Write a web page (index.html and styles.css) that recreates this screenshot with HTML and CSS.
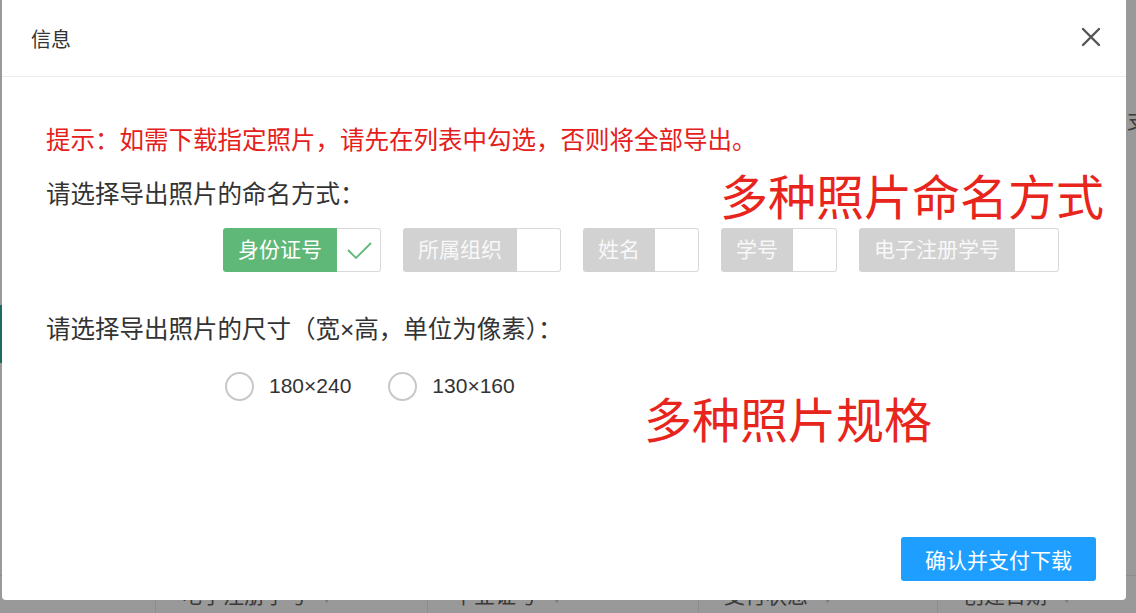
FILE: index.html
```html
<!DOCTYPE html>
<html lang="zh-CN">

<head>
    <meta charset="UTF-8">
    <meta name="viewport" content="width=device-width, initial-scale=1.0">
    <title>导出照片</title>
    <link rel="stylesheet" href="styles.css">
</head>

<body>
    <!-- page under the mask -->
    <div class="page">
        <div class="page__side"></div>
        <div class="page__edge">支</div>
        <div class="table-head">
            <div class="table-head__cell table-head__cell--first"></div>
            <div class="table-head__cell">电子注册学号 <span class="table-head__arrow">▼</span></div>
            <div class="table-head__cell">毕业证号 <span class="table-head__arrow">▼</span></div>
            <div class="table-head__cell">支付状态 <span class="table-head__arrow">▼</span></div>
            <div class="table-head__cell">创建日期 <span class="table-head__arrow">▼</span></div>
        </div>
    </div>

    <!-- dialog -->
    <div class="dialog">
        <div class="dialog__head">
            <span class="dialog__title">信息</span>
            <button class="dialog__close" type="button">
                <svg width="20" height="20" viewBox="0 0 20 20">
                    <path d="M2 2 L18 18 M18 2 L2 18" stroke="#555" stroke-width="2.4" fill="none" stroke-linecap="round" />
                </svg>
            </button>
        </div>

        <div class="dialog__body">
            <p class="dialog__tip">提示：如需下载指定照片，请先在列表中勾选，否则将全部导出。</p>

            <p class="dialog__label">请选择导出照片的命名方式：</p>
            <div class="switches">
                <div class="switch switch--on">
                    <span class="switch__text">身份证号</span>
                    <span class="switch__box">
                        <svg width="28" height="22" viewBox="0 0 28 22">
                            <path d="M3 11 L11 19 L26 4" stroke="#5fb878" stroke-width="1.8" fill="none" />
                        </svg>
                    </span>
                </div>
                <div class="switch">
                    <span class="switch__text">所属组织</span>
                    <span class="switch__box"></span>
                </div>
                <div class="switch">
                    <span class="switch__text">姓名</span>
                    <span class="switch__box"></span>
                </div>
                <div class="switch">
                    <span class="switch__text">学号</span>
                    <span class="switch__box"></span>
                </div>
                <div class="switch">
                    <span class="switch__text">电子注册学号</span>
                    <span class="switch__box"></span>
                </div>
            </div>

            <p class="dialog__label dialog__label--size">请选择导出照片的尺寸（宽×高，单位为像素）：</p>
            <div class="radios">
                <label class="radio">
                    <span class="radio__icon"></span>
                    <span class="radio__text">180×240</span>
                </label>
                <label class="radio">
                    <span class="radio__icon"></span>
                    <span class="radio__text">130×160</span>
                </label>
            </div>
        </div>

        <div class="dialog__foot">
            <button class="dialog__btn" type="button">确认并支付下载</button>
        </div>

        <!-- annotations -->
        <div class="note note--naming">多种照片命名方式</div>
        <div class="note note--size">多种照片规格</div>
    </div>
</body>

</html>
```

FILE: styles.css
```css
* {
    box-sizing: border-box;
}

body {
    margin: 0;
    width: 1136px;
    height: 613px;
    overflow: hidden;
    position: relative;
    background: #999999;
    font-family: "Liberation Sans", "Noto Sans CJK SC", sans-serif;
    color: #333333;
}

p {
    margin: 0;
}

/* page behind mask */
.page {
    height: 100%;
    position: relative;
}

.page__side {
    position: absolute;
    left: 0;
    top: 305px;
    width: 2px;
    height: 58px;
    background: #1f6a5c;
}

.page__edge {
    position: absolute;
    left: 1127px;
    top: 106px;
    font-size: 21px;
    line-height: 30px;
    color: #3c3c3c;
}

.table-head {
    position: absolute;
    left: 0;
    top: 575px;
    height: 44px;
    display: flex;
    border-top: 1px solid #8c8c8c;
}

.table-head__cell {
    flex-shrink: 0;
    width: 200px;
    padding-left: 25px;
    font-size: 21px;
    line-height: 40px;
    color: #3a3a3a;
    border-left: 1px solid #8c8c8c;
    white-space: nowrap;
}

.table-head__cell:nth-child(2) {
    width: 272px;
}

.table-head__cell:nth-child(3) {
    width: 271px;
}

.table-head__cell:nth-child(4) {
    width: 239px;
}

.table-head__cell--first {
    width: 155px;
    border-left: 0;
}

.table-head__arrow {
    font-size: 12px;
    color: #7a7a7a;
    margin-left: 8px;
}

/* dialog */
.dialog {
    position: absolute;
    left: 2px;
    top: 0;
    width: 1124px;
    height: 600px;
    background: #ffffff;
    border-radius: 0 0 4px 4px;
    display: flex;
    flex-direction: column;
}

.dialog__head {
    height: 77px;
    display: flex;
    align-items: center;
    justify-content: space-between;
    padding: 0 24px 0 29px;
    border-bottom: 1px solid #ececec;
}

.dialog__title {
    font-size: 20px;
    color: #333333;
}

.dialog__close {
    border: 0;
    background: none;
    padding: 0;
    width: 22px;
    height: 22px;
    display: flex;
    align-items: center;
    justify-content: center;
    margin-top: -2px;
}

.dialog__body {
    padding: 46px 30px 0 44px;
}

.dialog__tip {
    font-size: 24.5px;
    line-height: 36px;
    color: #e5201b;
}

.dialog__label {
    margin-top: 18px;
    font-size: 24.5px;
    line-height: 36px;
    color: #333333;
}

.dialog__label--size {
    margin-top: 40px;
}

/* switches */
.switches {
    margin-top: 15px;
    margin-left: 177px;
    display: flex;
    gap: 22px;
}

.switch {
    display: flex;
    height: 44px;
}

.switch__text {
    padding: 0 15px;
    line-height: 44px;
    font-size: 21px;
    color: #f8f8f8;
    background: #d2d2d2;
    border-radius: 3px 0 0 3px;
}

.switch--on .switch__text {
    background: #5fb878;
    color: #ffffff;
}

.switch__box {
    width: 44px;
    border: 1px solid #d9d9d9;
    border-left: 0;
    border-radius: 0 3px 3px 0;
    display: flex;
    align-items: center;
    justify-content: center;
}

/* radios */
.radios {
    margin-top: 20px;
    margin-left: 179px;
    display: flex;
    gap: 37px;
    height: 36px;
    align-items: center;
}

.radio {
    display: flex;
    align-items: center;
    gap: 15px;
}

.radio__icon {
    width: 29px;
    height: 29px;
    border: 2px solid #c8c8c8;
    border-radius: 50%;
}

.radio__text {
    font-size: 21px;
    color: #333333;
}

/* footer */
.dialog__foot {
    margin-top: auto;
    padding: 0 30px 19px 0;
    display: flex;
    justify-content: flex-end;
}

.dialog__btn {
    height: 44px;
    padding: 0 24px;
    border: 0;
    border-radius: 3px;
    background: #1e9fff;
    color: #ffffff;
    font-family: inherit;
    font-size: 21px;
}

/* red notes over the dialog */
.note {
    position: absolute;
    font-size: 48px;
    line-height: 48px;
    color: #e8251c;
    white-space: nowrap;
}

.note--naming {
    left: 718px;
    top: 175px;
}

.note--size {
    left: 642px;
    top: 398px;
}
```
